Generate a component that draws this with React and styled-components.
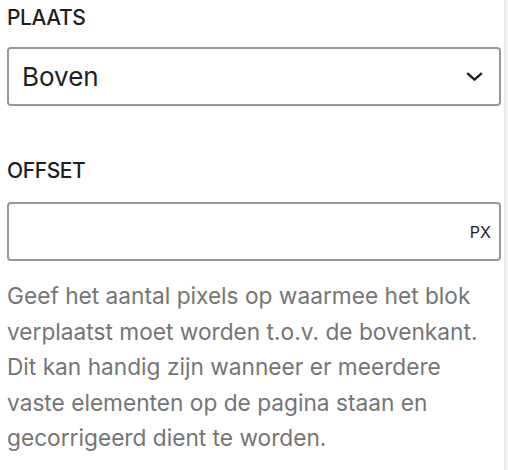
import React from 'react';
import styled, { createGlobalStyle } from 'styled-components';

// Base page reset
const GlobalStyle = createGlobalStyle`
  html, body {
    margin: 0;
    padding: 0;
    background: #ffffff;
  }
  body {
    font-family: Inter, "Noto Sans", sans-serif;
    color: #1e1e1e;
  }
`;

// Whole sidebar strip, panel plus the thin track on the right
const Frame = styled.div`
  display: flex;
  width: 508px;
  height: 470px;
  overflow: hidden;
`;

// Settings panel
const Panel = styled.div`
  flex: 1;
  display: flex;
  flex-direction: column;
  padding: 5px 3px 0 7px;
`;

// Light scroll track on the right edge
const Track = styled.div`
  width: 3px;
  background: #f2f2f2;
  border-left: 1px solid #e6e6e6;
`;

// One label + control group
const Field = styled.div`
  display: flex;
  flex-direction: column;
  gap: ${(p) => p.$gap || 16}px;
  margin-bottom: ${(p) => p.$bottom || 0}px;
`;

const Label = styled.label`
  font-size: 21px;
  line-height: 26px;
  font-weight: 500;
  letter-spacing: -0.4px;
  text-transform: uppercase;
  color: #1e1e1e;
`;

// Shared boxed control look
const Box = styled.div`
  box-sizing: border-box;
  height: 59px;
  border: 2px solid #979797;
  border-radius: 4px;
  display: flex;
  align-items: center;
  background: #fff;
`;

const SelectBox = styled(Box)`
  padding: 0 16px 0 13px;
  justify-content: space-between;
`;

const SelectValue = styled.span`
  font-size: 26px;
  color: #1e1e1e;
`;

const InputBox = styled(Box)`
  padding: 0 8px 0 13px;
  justify-content: flex-end;
`;

const Suffix = styled.span`
  font-size: 16px;
  color: #1e1e1e;
`;

const Help = styled.p`
  margin: 17px 0 0 0;
  font-size: 22.7px;
  line-height: 35.5px;
  color: #757575;
`;

const Chevron = () => (
  <svg width="17" height="9" viewBox="0 0 17 9" fill="none">
    <path d="M1.2 1.2 L8.5 7.6 L15.8 1.2" stroke="#1e1e1e" strokeWidth="2.4" />
  </svg>
);

const App = () => (
  <Frame>
    <GlobalStyle />
    <Panel>
      <Field $bottom={52}>
        <Label>Plaats</Label>
        <SelectBox>
          <SelectValue>Boven</SelectValue>
          <Chevron />
        </SelectBox>
      </Field>
      <Field $gap={18}>
        <Label>Offset</Label>
        <InputBox>
          <Suffix>PX</Suffix>
        </InputBox>
      </Field>
      <Help>
        Geef het aantal pixels op waarmee het blok verplaatst moet worden t.o.v. de bovenkant.
        Dit kan handig zijn wanneer er meerdere vaste elementen op de pagina staan en
        gecorrigeerd dient te worden.
      </Help>
    </Panel>
    <Track />
  </Frame>
);

export default App;
